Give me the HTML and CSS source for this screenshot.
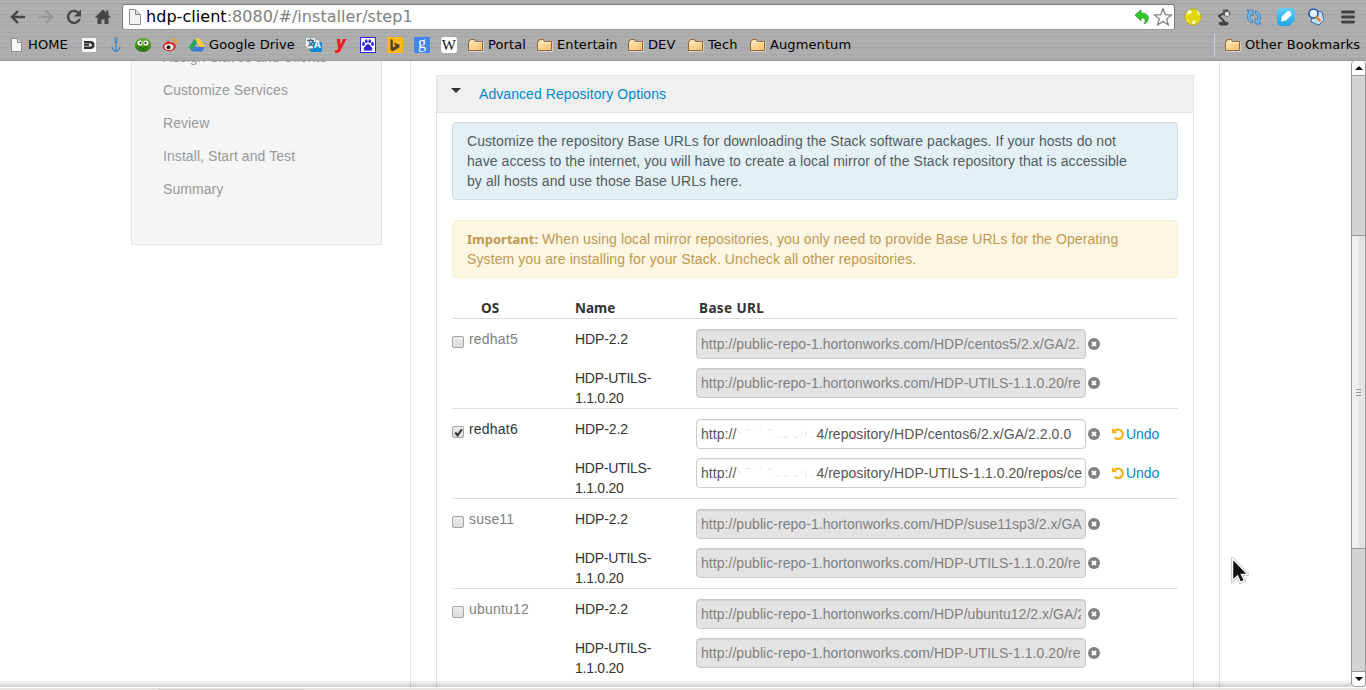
FILE: index.html
```html
<!DOCTYPE html>
<html lang="en">
<head>
<meta charset="utf-8">
<title>Installer</title>
<link rel="stylesheet" href="styles.css">
</head>
<body>
<svg class="defs" width="0" height="0">
  <defs>
    <linearGradient id="fold" x1="0" y1="0" x2="1" y2="1"><stop offset="0" stop-color="#ffe9bd"/><stop offset="1" stop-color="#f9c268"/></linearGradient>
    <linearGradient id="blue" x1="0" y1="0" x2="0" y2="1"><stop offset="0" stop-color="#5fd0fb"/><stop offset="1" stop-color="#1f9fe8"/></linearGradient>
    <radialGradient id="green" cx=".5" cy=".25" r=".8"><stop offset="0" stop-color="#6cc22b"/><stop offset="1" stop-color="#1f6c0a"/></radialGradient>
    <symbol id="folder" viewBox="0 0 16 16"><path d="M.5 13V4.500h1l.8-2h4.200l.8 2h7.200V13.500H.5z" fill="url(#fold)" stroke="#96683a"/><path d="M1.500 5.500h12" stroke="#ffefce"/><path d="M1 14.500h14.500V5" fill="none" stroke="#cfcfcf"/></symbol>
    <symbol id="page" viewBox="0 0 16 16"><path d="M3.500 1.500h6l4 4v9h-10z" fill="#f7f7f7" stroke="#8d8d8d"/><path d="M9.500 1.500v4h4" fill="#ddd" stroke="#8d8d8d"/></symbol>
    <symbol id="remove" viewBox="0 0 12 12"><circle cx="6" cy="6" r="6" fill="#808080"/><path d="M4 4l4 4M8 4L4 8" stroke="#fff" stroke-width="2"/></symbol>
    <symbol id="undo" viewBox="0 0 12 12"><path d="M2.500 3.300A4.700 4.700 0 1 1 2.700 9.600" fill="none" stroke="#f5b21c" stroke-width="2.300"/><path d="M0 0v5.200h5.200z" fill="#f5b21c"/></symbol>
    <symbol id="erased" viewBox="0 0 84 16"><path d="M1 3l3 5 1-2M9 3.500h6M24 3.500h3M34 3.500h4M50 11.500h5M61 11.500h4M68 9l2-3" fill="none" stroke="#e2e2e2"/><path d="M40 11.500h7M73 4.500v7M77 11.500h4" fill="none" stroke="#ececec"/></symbol>
  </defs>
</svg>

<header class="chrome">
  <div class="toolbar">
    <svg class="nav" viewBox="0 0 18 18"><path d="M16 9H4M9 3L3 9l6 6" fill="none" stroke="#464646" stroke-width="2.400"/></svg>
    <svg class="nav" viewBox="0 0 18 18"><path d="M2 9h12M9 3l6 6-6 6" fill="none" stroke="#979797" stroke-width="2.200"/></svg>
    <svg class="nav" viewBox="0 0 18 18"><path d="M14 5.500A6 6 0 1 0 14.700 11" fill="none" stroke="#464646" stroke-width="2.400"/><path d="M16 1.500v7H9z" fill="#464646"/></svg>
    <svg class="nav home" viewBox="0 0 18 18"><path d="M9 1.500L.8 9.500h2.700V16H7.500v-4.500h3V16h4V9.500h2.700L14.500 7V2.500h-2.200v2.200z" fill="#464646"/></svg>
    <div class="omnibox">
      <svg class="doc" viewBox="0 0 16 18"><path d="M2.500 1.500h6l5 5v10h-11z" fill="#f4f4f4" stroke="#8a8a8a"/><path d="M8.500 1.500v5h5" fill="#ddd" stroke="#8a8a8a"/></svg>
      <span class="url"><b>hdp-client</b>:8080/#/installer/step1</span>
      <svg class="greenback" viewBox="0 0 16 16"><path d="M1 6l6-5v3.200c6-.6 9 3.500 6.500 7.800-.6 1.300-2 2.300-3.500 3 2.400-3.300 1.300-6-3-6.200V12z" fill="#2fca27" stroke="#27852a" stroke-width=".7"/></svg>
      <svg class="star" viewBox="0 0 20 20"><path d="M10 1.800l2.300 5.900 6.200.3-4.800 3.900 1.700 6-5.400-3.400-5.400 3.400 1.700-6L1.500 8l6.200-.3z" fill="#fff" stroke="#777" stroke-width="1.200"/></svg>
    </div>
    <div class="extensions">
      <svg viewBox="0 0 18 18"><circle cx="9" cy="9" r="8.300" fill="#e1d709" stroke="#a5a137" stroke-width=".7"/><path d="M4 2.500l2-.5 2 2-2 2-3 1zM12 2l3 2 1 4-2-2zM9 12l3 1-2 3H8zM2 11l3 2-1 1z" fill="#fffbd7"/></svg>
      <svg class="lamp" viewBox="0 0 18 18"><path d="M9 5L4 8l5 5v3" fill="none" stroke="#3c3c3c" stroke-width="1.800"/><ellipse cx="8.500" cy="15.500" rx="5" ry="2" fill="#444"/><path d="M8 2l4-1 4 5-4 3-4-2z" fill="#555"/><circle cx="12" cy="6" r="2.200" fill="#ddd"/></svg>
      <svg viewBox="0 0 18 18"><g stroke="#3579b5" stroke-width=".8" fill="#72b5e6"><path d="M2 2h6v6L6 6.200C4.500 8.500 5 11 7.500 12v3C2.500 13.500 1 9 3.800 4z"/><path d="M16 16h-6v-6l2 1.800c1.500-2.300 1-4.800-1.500-5.800V3c5 1.500 6.500 6 3.700 11z"/></g></svg>
      <svg class="pen" viewBox="0 0 18 18"><path d="M3 0h12l3 3v9l-6 6H3l-3-3V3z" fill="url(#blue)"/><path d="M4 13.500l1-5 5-5q2-1 3.500.5t.5 3.500l-5 5z" fill="#fff"/></svg>
      <svg class="search" viewBox="0 0 18 18"><path d="M7 2l8 2 2 8-5 5-8-3z" fill="#c7dcf5" stroke="#416bae"/><circle cx="6.500" cy="5.500" r="4.500" fill="#e4f3ff" stroke="#1f55b8" stroke-width="1.600"/><path d="M9 8.500l4.500 5" stroke="#db8b24" stroke-width="2.600"/></svg>
      <svg class="menu" viewBox="0 0 18 18"><path d="M3.500 4h11M3.500 9h11M3.500 14h11" stroke="#424242" stroke-width="3" stroke-linecap="round"/></svg>
    </div>
  </div>
  <nav class="bookmarks">
    <a class="bm bm-home"><svg viewBox="0 0 16 16"><use href="#page"/></svg>HOME</a>
    <a class="bm"><svg viewBox="0 0 16 16"><rect x="1" y="1" width="14" height="14" rx="1" fill="#f6f6f6"/><path d="M3 4h6.500q4 0 4 4t-4 4H3V9.500h6.500q1.300 0 1.300-1.500T9.500 6.500H3z" fill="#303030"/><path d="M3 7h5v1.800H3z" fill="#303030"/></svg></a>
    <a class="bm"><svg viewBox="0 0 16 16"><path d="M8 3.500V14M4 9.500q.5 4.500 4 4.800 3.500-.3 4-4.800M6 5h4" fill="none" stroke="#4287cc" stroke-width="1.300"/><circle cx="8" cy="2" r="1.300" fill="none" stroke="#4287cc"/></svg></a>
    <a class="bm"><svg viewBox="0 0 16 16"><ellipse cx="8" cy="8" rx="8" ry="7" fill="url(#green)"/><circle cx="5" cy="6" r="2.500" fill="#fff"/><circle cx="11" cy="6" r="2.500" fill="#fff"/><circle cx="5.500" cy="6" r="1" fill="#111"/><circle cx="10.500" cy="6" r="1" fill="#111"/><path d="M4 10q4 3 8 0" fill="none" stroke="#194f0b"/></svg></a>
    <a class="bm"><svg viewBox="0 0 16 16"><path d="M1 9q3-5 6-5l1 1.500q4-1 4.500 1.500Q15 9 13 12q-5 4-10 1-3-2-2-4z" fill="#df2630"/><ellipse cx="7" cy="10" rx="4.500" ry="3" fill="#fff"/><circle cx="6.500" cy="10.200" r="2" fill="#222"/><path d="M10 2q5-1 5 5M11 4.500q2-.3 2 2" fill="none" stroke="#f39a22" stroke-width="1.400"/></svg></a>
    <a class="bm bm-drive"><svg viewBox="0 0 16 16"><path d="M5.500 1.500h5L16 10h-5z" fill="#fccb35"/><path d="M5.500 1.500L8 5.700 3 14.500 0 10.300z" fill="#27a567"/><path d="M5.500 10H16l-2.700 4.500H3z" fill="#3f79dd"/></svg>Google Drive</a>
    <a class="bm"><svg viewBox="0 0 16 16"><path d="M0 1h9l1 10H2L0 9z" fill="#e9f3f8"/><path d="M1 3.500h7M4.500 1.500v2M2 9q4-1.500 5-5M3 5l4 4" fill="none" stroke="#43677d" stroke-width="1.300"/><path d="M7 5h9v10H5l-2-3h4z" fill="#1089d3"/></svg><i class="tag tr">A</i></a>
    <a class="bm"><i class="tag yy">y</i></a>
    <a class="bm"><svg viewBox="0 0 16 16"><rect x=".5" y=".5" width="15" height="15" fill="#fff" stroke="#2929df"/><g fill="#2929df"><ellipse cx="3.500" cy="7" rx="1.400" ry="1.900"/><ellipse cx="6.300" cy="4.200" rx="1.300" ry="1.900"/><ellipse cx="9.700" cy="4.200" rx="1.300" ry="1.900"/><ellipse cx="12.500" cy="7" rx="1.400" ry="1.900"/><path d="M8 7q1.500 0 2.500 2l2 2.500q0 2.500-2.500 2.200-2-.5-4 0Q3.500 14 3.500 11.500l2-2.500Q6.500 7 8 7z"/></g></svg></a>
    <a class="bm"><svg viewBox="0 0 16 16"><path d="M0 0h16v16H0z" fill="#fdb813"/><path d="M3.500 2l2.300.8v7.700L9 8.800 7.800 8 6.800 5.500l5.700 2.200v2.600l-7 4-2-1.200z" fill="#4f4224"/></svg></a>
    <a class="bm"><i class="tag gg">g</i></a>
    <a class="bm"><i class="tag ww">W</i></a>
    <a class="bm bm-portal"><svg viewBox="0 0 16 16"><use href="#folder"/></svg>Portal</a>
    <a class="bm bm-ent"><svg viewBox="0 0 16 16"><use href="#folder"/></svg>Entertain</a>
    <a class="bm bm-dev"><svg viewBox="0 0 16 16"><use href="#folder"/></svg>DEV</a>
    <a class="bm bm-tech"><svg viewBox="0 0 16 16"><use href="#folder"/></svg>Tech</a>
    <a class="bm bm-aug"><svg viewBox="0 0 16 16"><use href="#folder"/></svg>Augmentum</a>
    <a class="bm bm-other"><svg viewBox="0 0 16 16"><use href="#folder"/></svg>Other Bookmarks</a>
  </nav>
</header>

<div class="viewport">
  <aside class="steps">
    <span>Assign Slaves and Clients</span><span>Customize Services</span><span>Review</span><span>Install, Start and Test</span><span>Summary</span>
  </aside>
  <main class="content">
    <section class="panel">
      <h2><i class="caret"></i><a>Advanced Repository Options</a></h2>
      <div class="panel-body">
        <div class="alert info">Customize the repository Base URLs for downloading the Stack software packages. If your hosts do not<br>have access to the internet, you will have to create a local mirror of the Stack repository that is accessible<br>by all hosts and use those Base URLs here.</div>
        <div class="alert warn"><strong>Important:</strong> When using local mirror repositories, you only need to provide Base URLs for the Operating<br>System you are installing for your Stack. Uncheck all other repositories.</div>
        <div class="thead"><b>OS</b><b>Name</b><b>Base URL</b></div>
        <div class="os off">
          <label><i class="check"></i>redhat5</label>
          <span>HDP-2.2</span><div class="repo"><div class="field">http://public-repo-1.hortonworks.com/HDP/centos5/2.x/GA/2.</div><svg class="x"><use href="#remove"/></svg></div>
          <span class="second">HDP-UTILS-<br>1.1.0.20</span><div class="repo"><div class="field">http://public-repo-1.hortonworks.com/HDP-UTILS-1.1.0.20/re</div><svg class="x"><use href="#remove"/></svg></div>
        </div>
        <div class="os">
          <label><i class="check"><svg viewBox="0 0 12 12"><path d="M2.500 6l2.500 3L9.700 2.500" fill="none" stroke="#333" stroke-width="2.200"/></svg></i>redhat6</label>
          <span>HDP-2.2</span><div class="repo"><div class="field">http://<svg class="gap"><use href="#erased"/></svg>4/repository/HDP/centos6/2.x/GA/2.2.0.0</div><svg class="x"><use href="#remove"/></svg><a><svg class="u"><use href="#undo"/></svg>Undo</a></div>
          <span class="second">HDP-UTILS-<br>1.1.0.20</span><div class="repo"><div class="field">http://<svg class="gap"><use href="#erased"/></svg>4/repository/HDP-UTILS-1.1.0.20/repos/ce</div><svg class="x"><use href="#remove"/></svg><a><svg class="u"><use href="#undo"/></svg>Undo</a></div>
        </div>
        <div class="os off">
          <label><i class="check"></i>suse11</label>
          <span>HDP-2.2</span><div class="repo"><div class="field">http://public-repo-1.hortonworks.com/HDP/suse11sp3/2.x/GA</div><svg class="x"><use href="#remove"/></svg></div>
          <span class="second">HDP-UTILS-<br>1.1.0.20</span><div class="repo"><div class="field">http://public-repo-1.hortonworks.com/HDP-UTILS-1.1.0.20/re</div><svg class="x"><use href="#remove"/></svg></div>
        </div>
        <div class="os off">
          <label><i class="check"></i>ubuntu12</label>
          <span>HDP-2.2</span><div class="repo"><div class="field"><span class="clip">http://public-repo-1.hortonworks.com/HDP/ubuntu12/2.x/GA/2</span></div><svg class="x"><use href="#remove"/></svg></div>
          <span class="second">HDP-UTILS-<br>1.1.0.20</span><div class="repo"><div class="field">http://public-repo-1.hortonworks.com/HDP-UTILS-1.1.0.20/re</div><svg class="x"><use href="#remove"/></svg></div>
        </div>
      </div>
    </section>
  </main>
  <div class="scrollbar"><i class="btn up"></i><i class="track before"></i><i class="thumb"></i><i class="track after"></i><i class="btn down"></i></div>
  <div class="edge-shade"></div>
</div>
<footer class="desk"><i></i></footer>
<svg class="cursor" viewBox="0 0 18 28"><path d="M1.500 1.500v22l5-4.500 3 6.500 4-2-3-6h6.500z" fill="#111" stroke="#aaa" stroke-width="2.600"/><path d="M1.500 1.500v22l5-4.500 3 6.500 4-2-3-6h6.500z" fill="#111" stroke="#fff" stroke-width="1.500"/></svg>
</body>
</html>
```
FILE: styles.css
```css
* { box-sizing: border-box; }
body { margin: 0; width: 1366px; height: 690px; overflow: hidden; background: #fff; font: 14px/20px "Liberation Sans", Arial, sans-serif; color: #333; }
svg { display: block; flex: none; }
.defs { position: absolute; }
i { font-style: normal; flex: none; }

.chrome { height: 61px; border-bottom: 1px solid #969696; color: #000; font-family: "DejaVu Sans", sans-serif;
  background: repeating-linear-gradient(180deg, #a9a9a9 0, #b4b4b4 2px, #a4a4a4 3px, #afafaf 5px, #ababab 7px, #b2b2b2 9px, #a7a7a7 11px); }
.toolbar { height: 33px; display: flex; align-items: center; padding-left: 9px; }
.nav { width: 18px; height: 18px; margin-right: 10px; }
.nav.home { margin: 0 10px 0 1px; }
.omnibox { width: 1053px; height: 26px; display: flex; align-items: center; border: 1px solid #7d7d7d; border-bottom-color: #959b95; border-radius: 3px; background: #fff; padding: 0 1px 0 4px; }
.doc { width: 16px; height: 18px; }
.url { flex: 1; margin-left: 3px; font: 16px/24px "DejaVu Sans", sans-serif; letter-spacing: .05px; color: #808080; white-space: nowrap; }
.url b { font-weight: normal; color: #000; }
.greenback { width: 16px; height: 16px; margin-right: 3px; }
.star { width: 20px; height: 20px; }
.extensions { display: flex; margin-left: 9px; }
.extensions svg { width: 18px; height: 18px; }
.extensions .lamp { margin: 0 12px 0 13px; }
.extensions .pen { margin-left: 14px; }
.extensions .search { margin: 0 14px 0 12px; }

.bookmarks { height: 24px; display: flex; align-items: center; padding-left: 8px; font-size: 13px; letter-spacing: .1px; line-height: 24px; white-space: nowrap; }
.bm { width: 27px; height: 24px; flex: none; display: flex; align-items: center; position: relative; }
.bm svg { width: 16px; height: 16px; margin-right: 4px; }
.bm-home { width: 73px; }
.bm-drive { width: 117px; }
.bm-portal { width: 69px; }
.bm-ent { width: 91px; }
.bm-dev { width: 60px; }
.bm-tech { width: 62px; }
.bm-aug { width: 110px; }
.bm-other { margin-left: auto; width: 152px; padding-left: 10px; border-left: 1px solid #c8d2f0; }
.tag { width: 16px; height: 16px; text-align: center; line-height: 16px; }
.tr { position: absolute; left: 7px; top: 6px; width: 9px; color: #fff; font: bold 10px/12px "Liberation Sans", sans-serif; }
.yy { color: #ef1c23; font: italic 800 17px/12px "Open Sans", sans-serif; }
.gg { background: #4285f4; color: #fff; font: 16px/12px "Liberation Serif", serif; border-radius: 1px; }
.ww { background: #fff; color: #111; font: 15px/16px "Liberation Serif", serif; border-radius: 3px; }

.viewport { height: 626px; position: relative; display: flex; overflow: hidden; letter-spacing: .07px; }
.steps { width: 251px; height: 184px; margin-left: 131px; padding-left: 31px; display: flex; flex-direction: column; gap: 13px; background: #f5f5f5; border: 1px solid #e3e3e3; border-top: 0; color: #999; white-space: nowrap; }
.steps span:first-child { margin-top: -14px; }
.content { width: 810px; margin-left: 28px; padding: 14px 25px 0; border: solid #e3e3e3; border-width: 0 1px; }
.panel { width: 758px; height: 640px; border: 1px solid #e3e3e3; }
.panel h2 { margin: 0; height: 37px; display: flex; align-items: center; background: #f0f0f0; border-bottom: 1px solid #e3e3e3; font-size: 14px; font-weight: normal; }
.caret { margin: -7px 18px 0 14px; border: solid transparent; border-width: 5px 5px 0; border-top-color: #333; }
a { color: #0088cc; }
.bookmarks a { color: #000; }
.panel-body { padding: 9px 15px 0; white-space: nowrap; }
.alert { border: 1px solid #ccd9df; border-radius: 4px; padding: 8px 14px; margin-bottom: 20px; }
.info { background: #e4f0f6; color: #505c63; }
.warn { background: #fdf6e2; border-color: #fbeed5; color: #c09853; letter-spacing: .1px; }
.thead { display: grid; grid-template-columns: 123px 124px 1fr; height: 21px; border-bottom: 1px solid #ddd; }
.thead b:first-child { padding-left: 29px; }
.thead b { font-family: "Noto Sans", sans-serif; font-size: 13.500px; letter-spacing: .4px; }
.thead b:first-child { letter-spacing: .1px; }
.thead b:nth-child(2) { letter-spacing: 0; }
strong { font-family: "Noto Sans", sans-serif; font-size: 13px; line-height: 1; letter-spacing: 0; }
.os { height: 90px; padding-top: 10px; display: grid; grid-template-columns: 123px 121px 1fr; grid-template-rows: 39px 40px; border-bottom: 1px solid #ddd; }
.os:last-child { border-bottom: 0; }
.os label { display: flex; align-items: center; height: 20px; letter-spacing: .2px; }
.os > span { letter-spacing: -.1px; }
.os > .second { grid-column: 2; letter-spacing: -.25px; }
.off label { color: #808080; }
.check { width: 12px; height: 12px; margin: 5px 5px 0 0; border: 1px solid #a5a5a5; border-radius: 2px; background: linear-gradient(#ececec, #dcdcdc); }
.check svg { width: 11px; height: 11px; }
.repo { display: flex; align-items: center; height: 30px; }
.field { width: 390px; height: 30px; padding: 0 4px; border: 1px solid #ccc; border-radius: 4px; line-height: 28px; color: #555; display: flex; align-items: center; overflow: hidden; letter-spacing: .05px; box-shadow: inset 0 1px 1px rgba(0,0,0,.075); }
.off .field { background: #e3e3e3; color: #808080; border-color: #c9c9c9; }
.clip { width: 380px; overflow: hidden; }
.x { width: 12px; height: 12px; margin-left: 2px; }
.gap { width: 80px; height: 16px; }
.repo a { display: flex; align-items: center; margin-left: 12px; letter-spacing: -.1px; }
.u { width: 12px; height: 12px; margin-right: 2px; }

.scrollbar { position: absolute; right: 0; top: 0; width: 15px; height: 626px; display: flex; flex-direction: column; }
.scrollbar i { border: 1px solid #999; border-top-width: 0; }
.btn { height: 15px; background: #fff; display: flex; align-items: center; justify-content: center; border-radius: 4px 4px 0 0; }
.btn::after { content: ""; border: solid transparent; border-width: 0 4px 4px; border-bottom-color: #000; }
.down { border-radius: 0 0 4px 4px; }
.down::after { border-width: 4px 4px 0; border-top-color: #000; }
.track { background: #d3d3d3; }
.before { height: 160px; }
.thumb { height: 313px; background: linear-gradient(90deg, #f0f0f0 55%, #e3e3e3 55%); display: flex; align-items: center; justify-content: center; }
.thumb::after { content: ""; width: 5px; height: 7px; background: repeating-linear-gradient(#999 0 1px, transparent 1px 3px); }
.scrollbar .after { flex: 1; }
.edge-shade { position: absolute; left: 0; bottom: 0; width: 1351px; height: 7px; background: linear-gradient(rgba(0,0,0,0), rgba(0,0,0,.2)); }
.desk { height: 3px; padding: 2px 0 0 158px; background: linear-gradient(#fff 1px, #e9e4df 1px); }
.desk i { display: block; width: 146px; height: 1px; background: #d5d0cb; }
.cursor { position: absolute; left: 1231px; top: 557px; width: 18px; height: 28px; }
```
